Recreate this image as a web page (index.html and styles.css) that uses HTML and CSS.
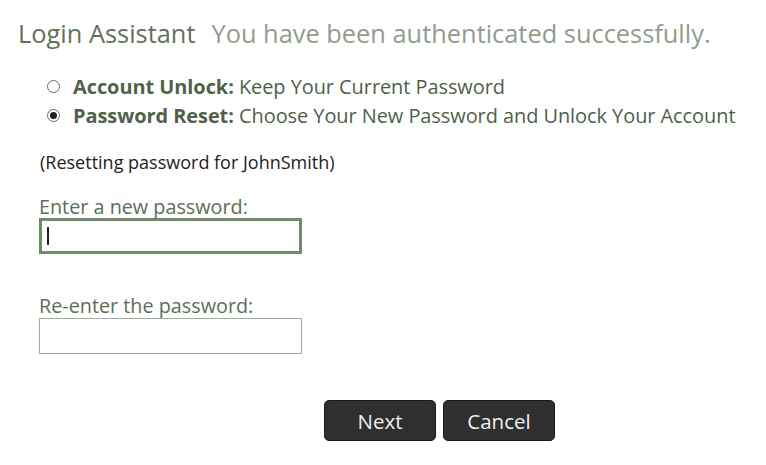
FILE: index.html
```html
<!DOCTYPE html>
<html>
<head>
<meta charset="utf-8">
<link rel="stylesheet" href="styles.css">
</head>
<body>
<div class="page">
  <h1 class="title"><span class="app">Login Assistant</span><span class="msg">You have been authenticated successfully.</span></h1>
  <div class="options">
    <label class="opt"><span class="radio"></span><b>Account Unlock:</b>&nbsp;Keep Your Current Password</label>
    <label class="opt"><span class="radio on"></span><b>Password Reset:</b>&nbsp;Choose Your New Password and Unlock Your Account</label>
  </div>
  <p class="note">(Resetting password for JohnSmith)</p>
  <div class="field first">
    <div class="lbl">Enter a new password:</div>
    <div class="input focus"><span class="caret"></span></div>
  </div>
  <div class="field second">
    <div class="lbl">Re-enter the password:</div>
    <div class="input"></div>
  </div>
  <div class="buttons">
    <button class="btn">Next</button>
    <button class="btn">Cancel</button>
  </div>
</div>
</body>
</html>
```
FILE: styles.css
```css
html, body { margin: 0; padding: 0; background: #fff; }
body { font-family: "Open Sans", "Noto Sans", sans-serif; width: 766px; height: 465px; overflow: hidden; }
.page { padding: 18px 0 0 18px; }
.title { margin: 0; font-weight: normal; font-size: 25.4px; line-height: 30px; display: flex; gap: 16px; }
.app { color: #5f7259; }
.msg { color: #909d8c; }
.options { margin: 24px 0 0 29px; display: flex; flex-direction: column; }
.opt { display: flex; align-items: center; height: 29px; font-size: 19.95px; color: #4e5f48; letter-spacing: -0.05px; }
.opt b { font-weight: 700; color: #4f6248; }
.radio { width: 11px; height: 11px; border: 1.5px solid #6a6a6a; border-radius: 50%; margin-right: 13px; position: relative; box-sizing: content-box; flex: none; }
.radio.on::after { content: ""; position: absolute; left: 2px; top: 2px; width: 7px; height: 7px; border-radius: 50%; background: #1e1e1e; }
.note { margin: 21px 0 0 22px; font-size: 18px; color: #222; line-height: 22px; }
.field { margin-left: 21px; }
.field.first { margin-top: 22px; }
.field.second { margin-top: 39px; }
.lbl { font-size: 19.8px; color: #5c6e55; line-height: 23px; }
.second .lbl { line-height: 25px; }
.input { width: 263px; height: 36px; box-sizing: border-box; border: 1px solid #a3aba0; }
.input.focus { border: 3px solid #708b68; display: flex; align-items: center; padding-left: 5px; }
.caret { width: 1.5px; height: 18px; background: #222; }
.buttons { display: flex; gap: 7px; margin: 46px 0 0 306px; }
.btn { width: 112px; height: 41px; background: #2f2f2f; color: #f0f0f0; border: 1px solid #1a1a1a; border-radius: 5px; font-family: inherit; font-size: 20.5px; padding: 0; }
```
